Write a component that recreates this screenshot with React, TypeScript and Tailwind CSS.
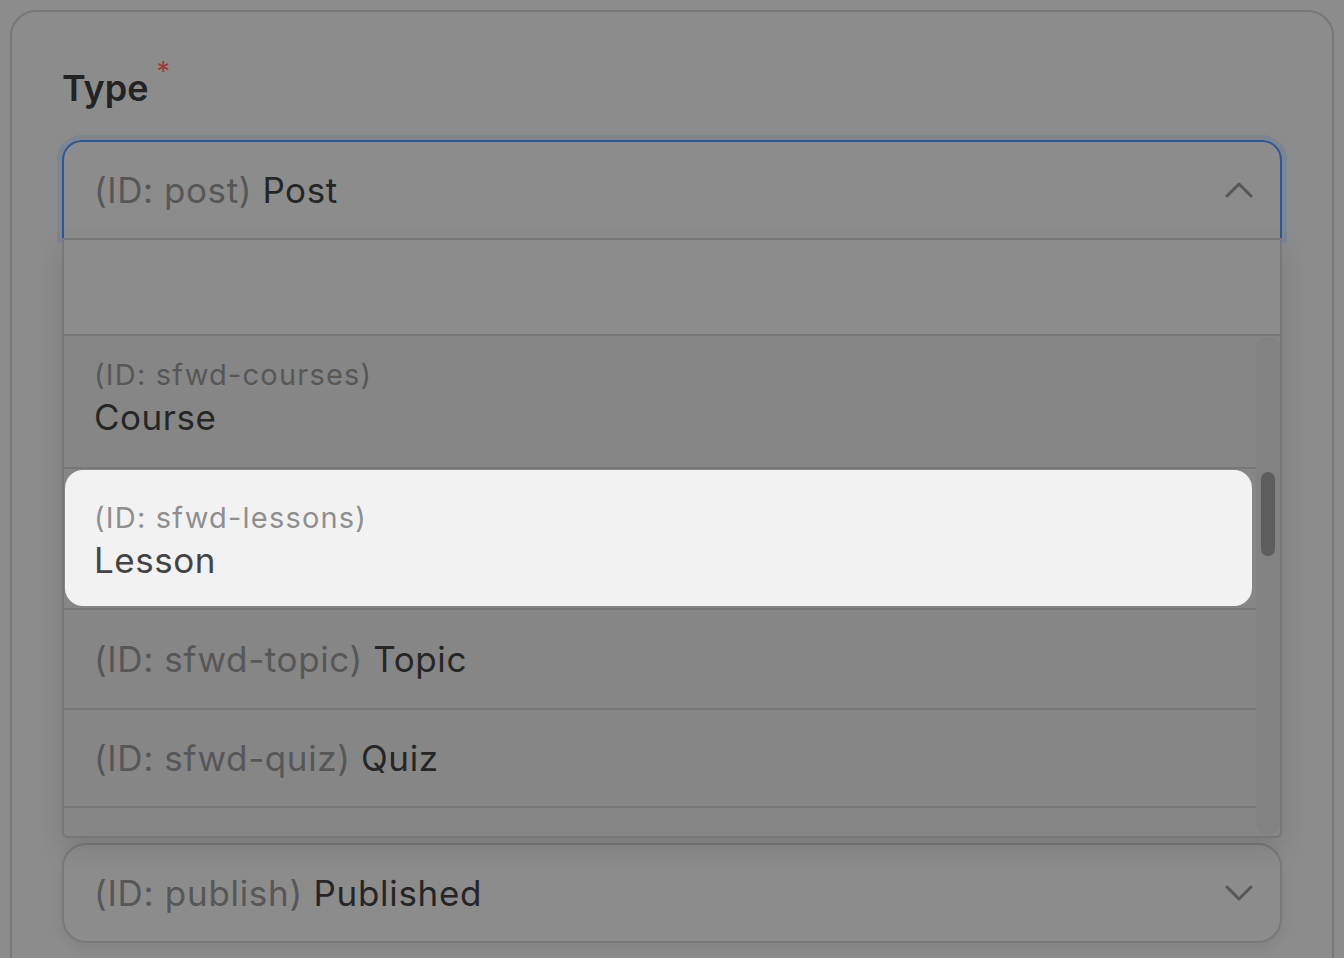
import React from "react";

function Chevron({ up }: { up?: boolean }) {
  return (
    <svg width="28" height="16" viewBox="0 0 28 16" fill="none">
      <path
        d={up ? "M2 14 L14 2 L26 14" : "M2 2 L14 14 L26 2"}
        stroke="#575757"
        strokeWidth="3"
        strokeLinecap="round"
        strokeLinejoin="round"
      />
    </svg>
  );
}

export default function App() {
  return (
    <div
      className="w-[1344px] h-[958px] overflow-hidden bg-[#8c8c8c] pt-[10px] px-[10px]"
      style={{ fontFamily: "Inter, 'Noto Sans', sans-serif" }}
    >
      <div className="h-[1000px] rounded-[26px] border-2 border-[#787878] pt-[54px] px-[50px]">
        <div className="flex items-start">
          <span className="text-[36px] font-semibold leading-[44px] text-[#232323]">Type</span>
          <span className="ml-[8px] -mt-[8px] text-[27px] leading-[27px] text-[#a33a3a]">*</span>
        </div>

        <div className="relative mt-[30px]">
          <div className="flex h-[98px] items-center justify-between rounded-t-[20px] border-2 border-b-0 border-[#2c5896] pl-[30px] pr-[27px] shadow-[0_0_0_5px_#7b8593]">
            <div className="text-[35px] leading-[40px] tracking-[0.55px]">
              <span className="text-[#575757]">(ID: post)</span>{" "}
              <span className="text-[#262626]">Post</span>
            </div>
            <Chevron up />
          </div>

          <div className="absolute left-0 right-0 top-full z-10 rounded-b-[6px] border-x-2 border-b-2 border-[#777777] bg-[#868686] shadow-[0_10px_24px_rgba(0,0,0,0.12)]">
            <div className="h-[98px] border-y-2 border-[#777777] bg-[#8c8c8c]" />
            <div className="flex h-[500px] overflow-hidden">
              <div className="flex-1">
                <div className="h-[133px] border-b-2 border-[#777777] pl-[30px] pt-[22px]">
                  <div className="text-[29px] leading-[34px] tracking-[1.2px] text-[#575757]">(ID: sfwd-courses)</div>
                  <div className="mt-[5px] text-[35px] leading-[40px] tracking-[0.5px] text-[#262626]">Course</div>
                </div>
                <div className="h-[141px] border-b-2 border-[#777777] pt-[1px] pb-[2px] pl-[1px] pr-[4px]">
                  <div className="h-full rounded-[18px] bg-[#f2f2f2] pl-[29px] pt-[31px]">
                    <div className="text-[29px] leading-[34px] tracking-[1.2px] text-[#8f8f8f]">(ID: sfwd-lessons)</div>
                    <div className="mt-[5px] text-[35px] leading-[40px] tracking-[0.5px] text-[#444444]">Lesson</div>
                  </div>
                </div>
                <div className="flex h-[100px] items-center border-b-2 border-[#777777] pl-[30px]">
                  <div className="text-[35px] leading-[40px] tracking-[0.6px]">
                    <span className="text-[#575757]">(ID: sfwd-topic)</span>{" "}
                    <span className="text-[#262626]">Topic</span>
                  </div>
                </div>
                <div className="flex h-[98px] items-center border-b-2 border-[#777777] pl-[30px]">
                  <div className="text-[35px] leading-[40px] tracking-[0.6px]">
                    <span className="text-[#575757]">(ID: sfwd-quiz)</span>{" "}
                    <span className="text-[#262626]">Quiz</span>
                  </div>
                </div>
              </div>
              <div className="w-[24px] py-[1px]">
                <div className="h-full rounded-full bg-[#828282] px-[5px] pt-[135px]">
                  <div className="h-[84px] rounded-full bg-[#5d5d5d]" />
                </div>
              </div>
            </div>
          </div>
        </div>

        <div className="mt-[605px] flex h-[100px] items-center justify-between rounded-[24px] border-2 border-[#787878] pl-[30px] pr-[27px] shadow-[0_4px_12px_rgba(0,0,0,0.08)]">
          <div className="text-[35px] leading-[40px] tracking-[0.7px]">
            <span className="text-[#575757]">(ID: publish)</span>{" "}
            <span className="text-[#262626]">Published</span>
          </div>
          <Chevron />
        </div>
      </div>
    </div>
  );
}
